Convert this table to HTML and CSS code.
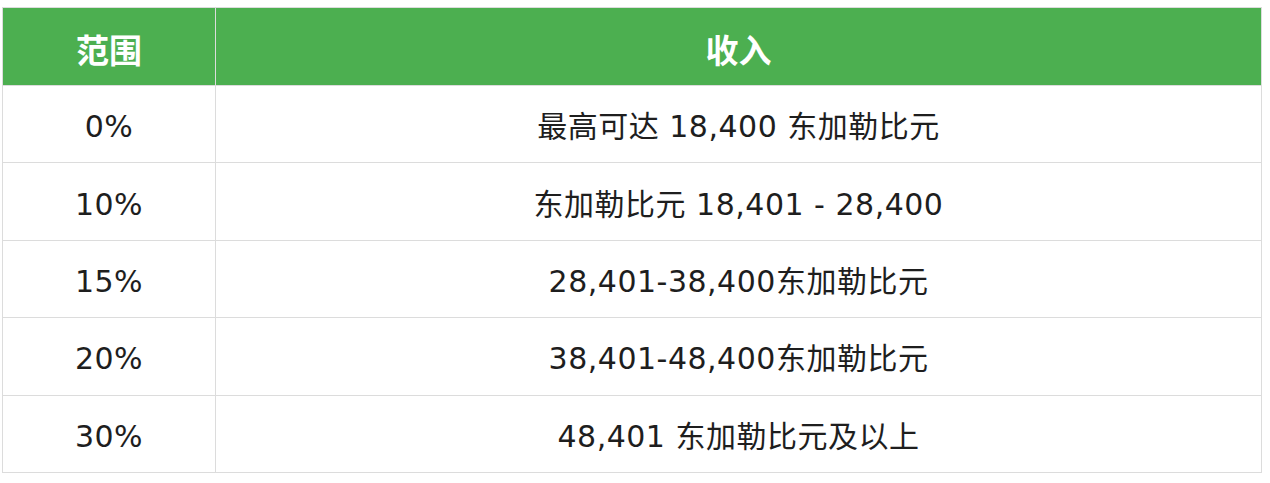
FILE: index.html
```html
<!DOCTYPE html>
<html lang="zh">
<head>
<meta charset="utf-8">
<link rel="stylesheet" href="styles.css">
</head>
<body>
<div class="wrap">
<table class="tax">
<thead>
<tr class="head-row"><th class="c1">范围</th><th class="c2">收入</th></tr>
</thead>
<tbody>
<tr class="row"><td>0%</td><td>最高可达 18,400 东加勒比元</td></tr>
<tr class="row"><td>10%</td><td>东加勒比元 18,401 - 28,400</td></tr>
<tr class="row"><td>15%</td><td>28,401-38,400东加勒比元</td></tr>
<tr class="row"><td>20%</td><td>38,401-48,400东加勒比元</td></tr>
<tr class="row"><td>30%</td><td>48,401 东加勒比元及以上</td></tr>
</tbody>
</table>
</div>
</body>
</html>
```

FILE: styles.css
```css
html, body {
  margin: 0;
  padding: 0;
  background: #fff;
}
.wrap {
  padding: 7px 0 0 2px;
}
.tax {
  width: 1260px;
  border-collapse: collapse;
  border: 1px solid #dcdcdc;
  font-family: "DejaVu Sans", "Noto Sans CJK SC", sans-serif;
  color: #1e1e1e;
}
.tax th, .tax td {
  border: 1px solid #dcdcdc;
  text-align: center;
  vertical-align: middle;
  padding: 6px 0 0 0;
  line-height: 1.2;
}
.head-row { height: 78px; }
.row { height: 77.4px; }
.tax th {
  background: #4caf50;
  color: #fff;
  font-family: "Noto Sans CJK SC", sans-serif;
  font-size: 33px;
  font-weight: 700;
}
.tax td {
  font-size: 30px;
  letter-spacing: 0.5px;
}
.c1 { width: 212px; }
```
